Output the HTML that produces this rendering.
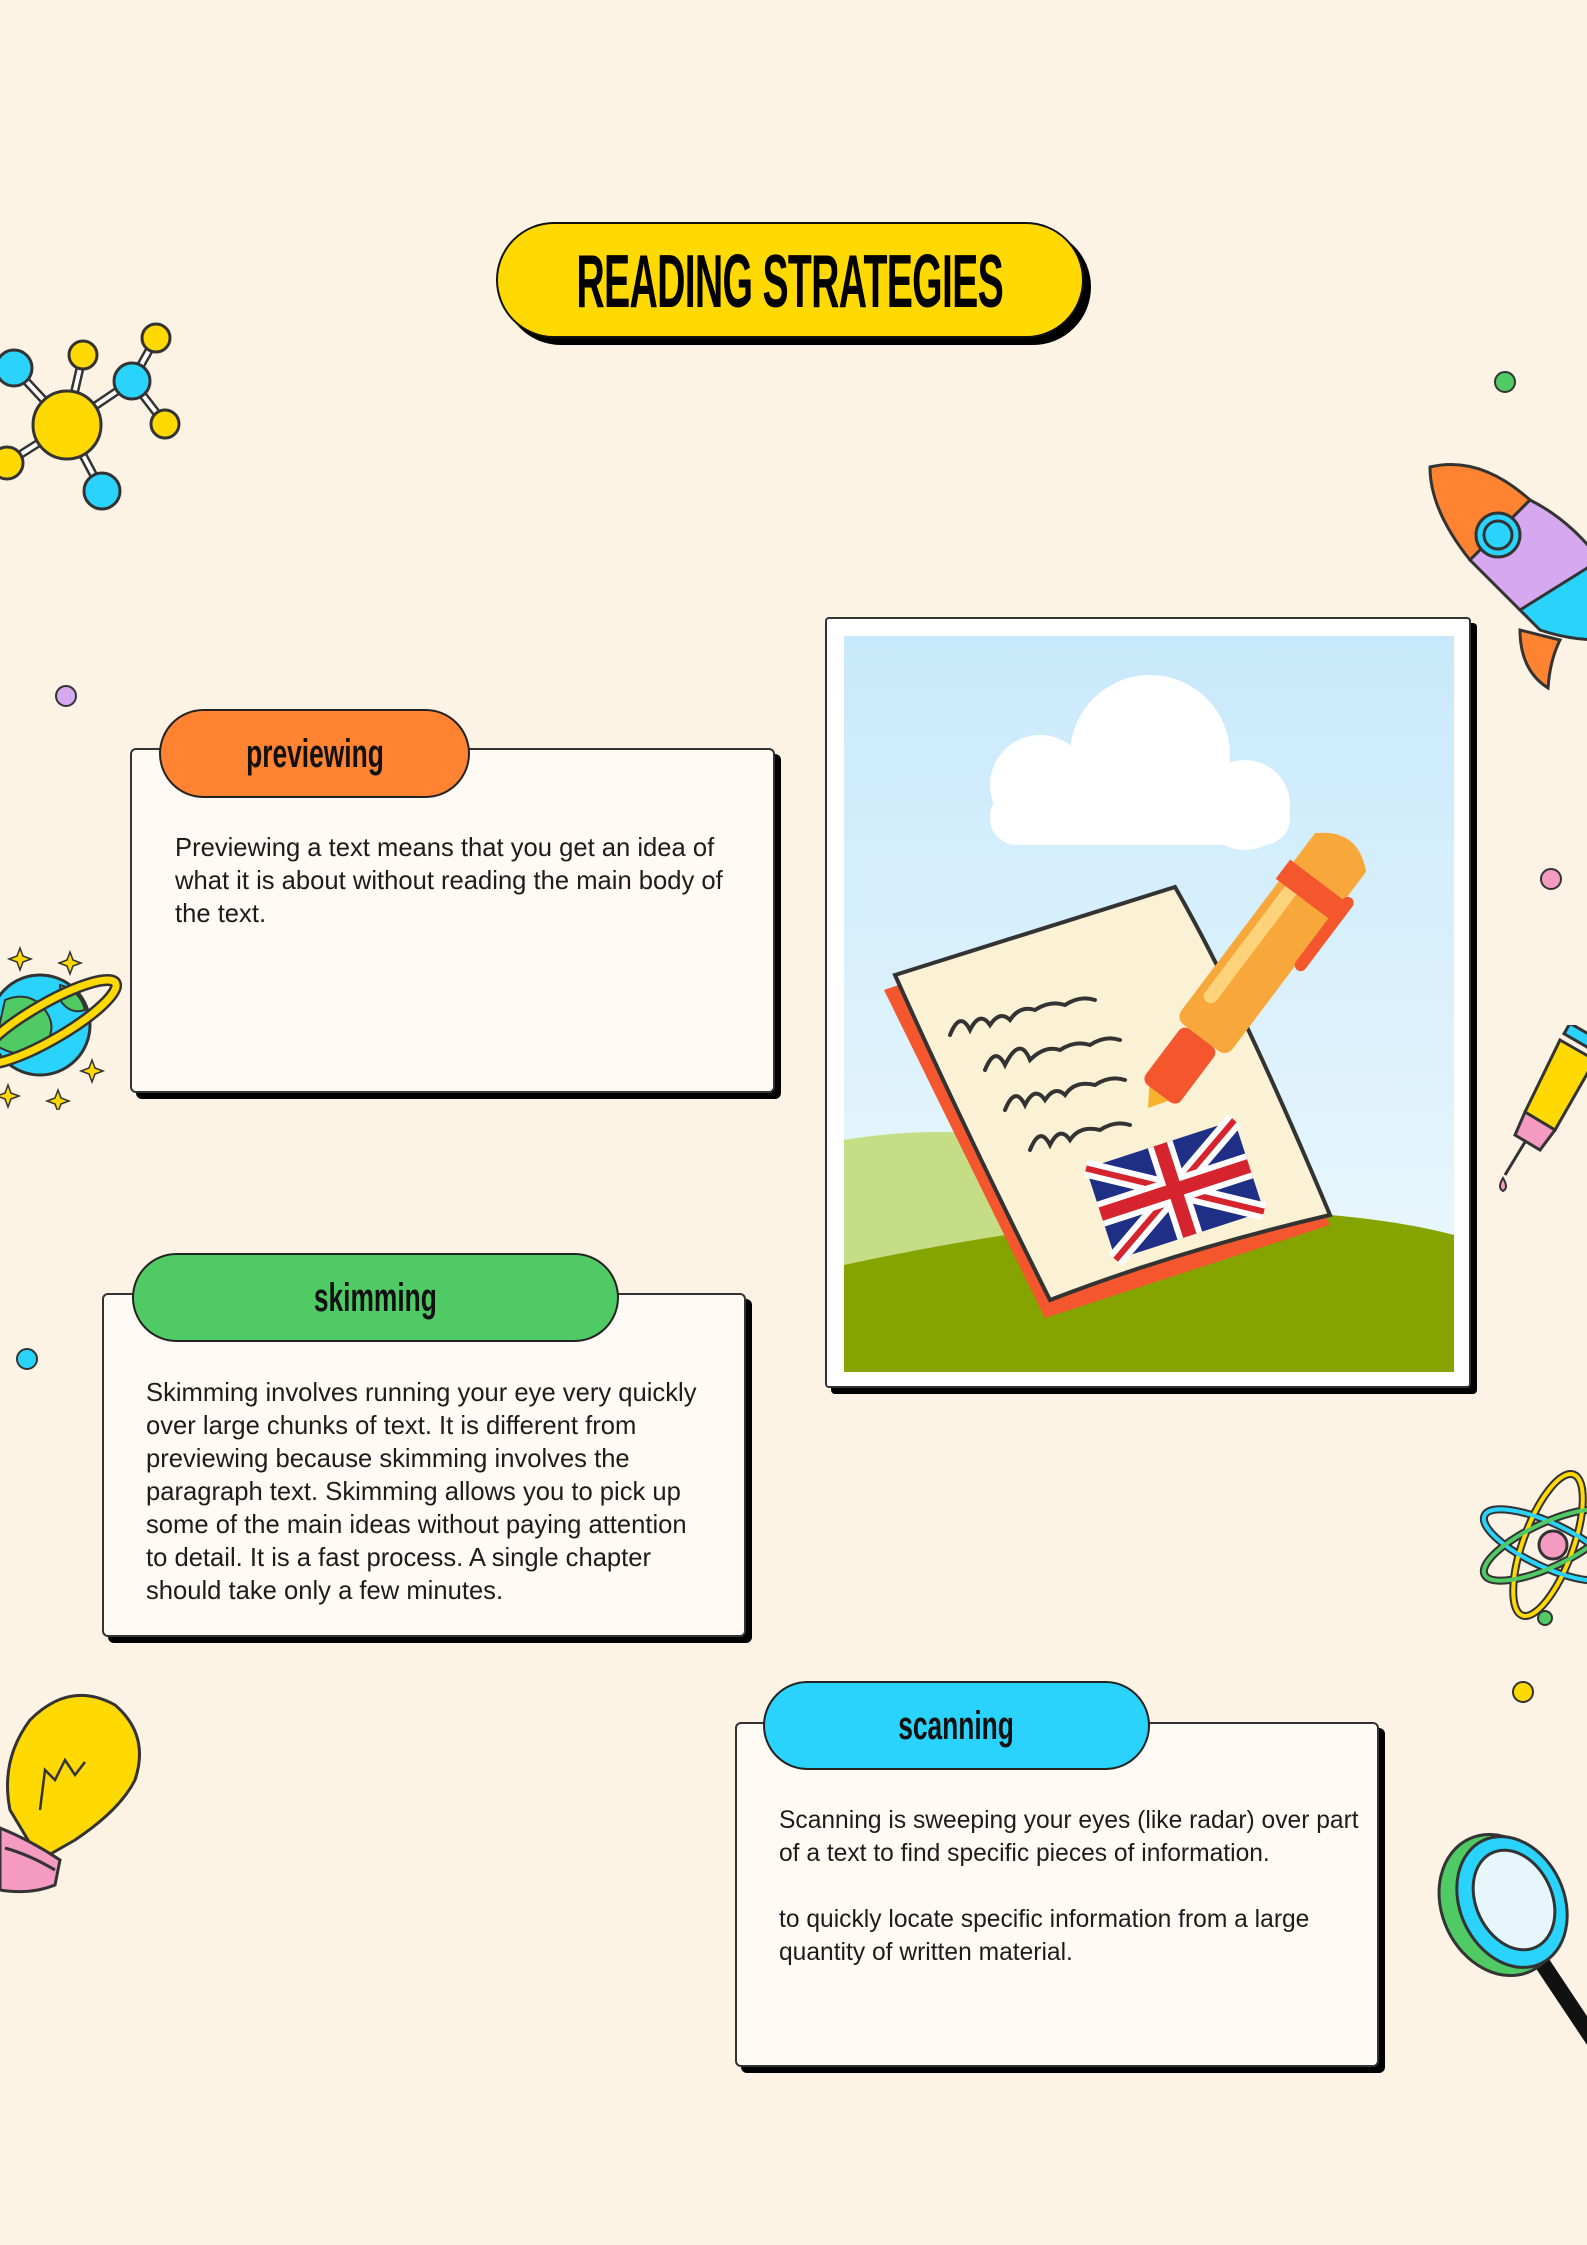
<!DOCTYPE html>
<html><head><meta charset="utf-8"><style>
*{margin:0;padding:0;box-sizing:border-box}
body{width:1587px;height:2245px;background:#fdf3e4;position:relative;overflow:hidden;font-family:"Liberation Sans",sans-serif;color:#1a1a1a}
.abs{position:absolute}
.title{left:496px;top:222px;width:588px;height:116px;background:#ffd900;border:2px solid #111;border-radius:58px;box-shadow:7px 7px 0 #000;display:flex;align-items:center;justify-content:center;white-space:nowrap}
.title span{font-family:"Liberation Sans Narrow","Liberation Sans",sans-serif;font-weight:bold;font-size:56px;transform:scale(0.70,1.35);letter-spacing:-1px;color:#000;white-space:nowrap;display:inline-block}
.card{background:#fffaf4;border:2px solid #333;border-radius:6px;box-shadow:6px 6px 0 #000}
.pill{border:2px solid #222;border-radius:45px;display:flex;align-items:center;justify-content:center}
.pill span{font-family:"Liberation Sans Narrow","Liberation Sans",sans-serif;font-weight:bold;font-size:31px;transform:scale(0.85,1.3);color:#111;display:inline-block}
.txt{font-size:25.6px;line-height:33px;color:#1c1c1c}
</style></head><body>

<div class="abs title"><span>READING STRATEGIES</span></div>

<!-- card 1 -->
<div class="abs card" style="left:130px;top:748px;width:645px;height:345px"></div>
<div class="abs pill" style="left:159px;top:709px;width:311px;height:89px;background:#ff8331"><span>previewing</span></div>
<div class="abs txt" style="left:175px;top:832px;width:565px">Previewing a text means that you get an idea of what it is about without reading the main body of the text.</div>

<!-- card 2 -->
<div class="abs card" style="left:102px;top:1293px;width:644px;height:344px"></div>
<div class="abs pill" style="left:132px;top:1253px;width:487px;height:89px;background:#4fca64"><span>skimming</span></div>
<div class="abs txt" style="left:146px;top:1377px;width:556px">Skimming involves running your eye very quickly over large chunks of text. It is different from previewing because skimming involves the paragraph text. Skimming allows you to pick up some of the main ideas without paying attention to detail. It is a fast process. A single chapter should take only a few minutes.</div>

<!-- card 3 -->
<div class="abs card" style="left:735px;top:1722px;width:644px;height:345px"></div>
<div class="abs pill" style="left:763px;top:1681px;width:387px;height:89px;background:#2ad3fb"><span>scanning</span></div>
<div class="abs txt" style="left:779px;top:1804px;width:590px;font-size:24.6px">Scanning is sweeping your eyes (like radar) over part of a text to find specific pieces of information.<br><br>to quickly locate specific information from a large quantity of written material.</div>

<!-- photo -->
<div class="abs" style="left:825px;top:617px;width:646px;height:771px;background:#fff;border:2px solid #333;border-radius:4px;box-shadow:6px 6px 0 #000"></div>
<svg class="abs" style="left:844px;top:636px" width="610" height="736" viewBox="844 636 610 736">
<defs><linearGradient id="sky" x1="0" y1="0" x2="0" y2="1"><stop offset="0" stop-color="#c8e9fb"/><stop offset="1" stop-color="#eef9fd"/></linearGradient></defs>
<rect x="844" y="636" width="610" height="736" fill="url(#sky)"/>
<g fill="#fff"><circle cx="1040" cy="785" r="50"/><circle cx="1150" cy="755" r="80"/><circle cx="1245" cy="805" r="45"/><rect x="990" y="790" width="300" height="55" rx="27"/></g>
<path d="M844 1140 Q960 1120 1100 1150 L1100 1372 L844 1372Z" fill="#c5de86"/>
<path d="M844 1265 Q1050 1220 1250 1210 Q1380 1215 1454 1235 L1454 1372 L844 1372Z" fill="#86a400"/>
<path d="M884 990 L1160 895 L1330 1225 L1045 1318 Z" fill="#f4572e" />
<path d="M895 975 L1175 887 Q1240 1000 1330 1215 Q1180 1250 1050 1300 Q960 1120 895 975Z" fill="#fbf2d5" stroke="#333" stroke-width="4"/>
<g fill="none" stroke="#333" stroke-width="4" stroke-linecap="round">
<path d="M950 1035 q10 -25 20 -5 q10 -20 20 -5 q10 -15 20 -5 q10 -15 25 -10 q15 -10 30 -5 q15 -10 30 -5"/>
<path d="M985 1070 q10 -25 20 -5 q15 -30 25 -5 q15 -15 30 -10 q15 -10 30 -5 q15 -10 30 -5"/>
<path d="M1005 1110 q10 -25 20 -5 q10 -20 20 -5 q10 -15 20 -5 q10 -15 30 -10 q15 -10 30 -5"/>
<path d="M1030 1150 q10 -25 20 -5 q10 -20 20 -5 q10 -15 30 -10 q15 -10 30 -5"/>
</g>
<g transform="translate(1175,1190) rotate(-18)">
<rect x="-78" y="-48" width="156" height="96" fill="#1f2f86"/>
<path d="M-78 -48 L78 48 M78 -48 L-78 48" stroke="#fff" stroke-width="18"/>
<path d="M-78 -48 L78 48 M78 -48 L-78 48" stroke="#d6242e" stroke-width="6"/>
<path d="M0 -48 V48 M-78 0 H78" stroke="#fff" stroke-width="26"/>
<path d="M0 -48 V48 M-78 0 H78" stroke="#d6242e" stroke-width="14"/>
</g>
<g transform="translate(1148,1108) rotate(-53)">
<path d="M0 0 L18 -12 L18 12 Z" fill="#f7b330"/>
<rect x="18" y="-22" width="70" height="44" rx="8" fill="#f4572e"/>
<rect x="88" y="-32" width="190" height="64" rx="10" fill="#f8a83a"/>
<rect x="120" y="-24" width="150" height="14" rx="7" fill="#fcd37a"/>
<rect x="260" y="-36" width="24" height="72" fill="#f4572e"/>
<path d="M284 -32 L320 -32 Q350 0 320 32 L284 32Z" fill="#f8a83a"/>
<rect x="200" y="30" width="90" height="12" rx="6" fill="#f4572e"/>
</g>
</svg>

<!-- dots -->
<div class="abs" style="left:1494px;top:371px;width:22px;height:22px;border-radius:50%;background:#4fca64;border:2px solid #333"></div>
<div class="abs" style="left:55px;top:685px;width:22px;height:22px;border-radius:50%;background:#d5a8f0;border:2px solid #333"></div>
<div class="abs" style="left:1540px;top:868px;width:22px;height:22px;border-radius:50%;background:#f59ac0;border:2px solid #333"></div>
<div class="abs" style="left:16px;top:1348px;width:22px;height:22px;border-radius:50%;background:#2ad3fb;border:2px solid #333"></div>
<div class="abs" style="left:1512px;top:1681px;width:22px;height:22px;border-radius:50%;background:#ffd900;border:2px solid #333"></div>

<!-- molecule -->
<svg class="abs" style="left:0;top:320px" width="190" height="200" viewBox="0 320 190 200">
<g stroke="#333" stroke-width="3">
<path d="M67 425 L14 368 M67 425 L83 355 M67 425 L132 381 M132 381 L156 338 M132 381 L165 424 M67 425 L102 491 M67 425 L7 463" stroke-width="9"/>
<path d="M67 425 L14 368 M67 425 L83 355 M67 425 L132 381 M132 381 L156 338 M132 381 L165 424 M67 425 L102 491 M67 425 L7 463" stroke="#fff" stroke-width="4"/>
<circle cx="67" cy="425" r="34" fill="#ffd900"/>
<circle cx="14" cy="368" r="18" fill="#2ad3fb"/>
<circle cx="83" cy="355" r="14" fill="#ffd900"/>
<circle cx="132" cy="381" r="18" fill="#2ad3fb"/>
<circle cx="156" cy="338" r="14" fill="#ffd900"/>
<circle cx="165" cy="424" r="14" fill="#ffd900"/>
<circle cx="102" cy="491" r="18" fill="#2ad3fb"/>
<circle cx="7" cy="463" r="16" fill="#ffd900"/>
</g></svg>

<!-- planet -->
<svg class="abs" style="left:0;top:940px" width="130" height="170" viewBox="0 940 130 170">
<circle cx="40" cy="1025" r="50" fill="#2ad3fb" stroke="#333" stroke-width="3"/>
<path d="M5 1000 Q30 990 45 1010 Q60 1030 40 1050 Q20 1060 -5 1045Z M60 985 Q80 990 85 1010 Q70 1015 60 1000Z" fill="#4fca64" stroke="#333" stroke-width="2"/>
<ellipse cx="48" cy="1022" rx="78" ry="18" transform="rotate(-30 48 1022)" fill="none" stroke="#333" stroke-width="12"/>
<ellipse cx="48" cy="1022" rx="78" ry="18" transform="rotate(-30 48 1022)" fill="none" stroke="#ffd900" stroke-width="7"/>
<g fill="#ffd900" stroke="#333" stroke-width="1.5"><path d="M20 948 l3 8 8 3 -8 3 -3 8 -3 -8 -8 -3 8 -3z"/><path d="M70 952 l3 8 8 3 -8 3 -3 8 -3 -8 -8 -3 8 -3z"/><path d="M92 1060 l3 8 8 3 -8 3 -3 8 -3 -8 -8 -3 8 -3z"/><path d="M58 1090 l3 8 8 3 -8 3 -3 8 -3 -8 -8 -3 8 -3z"/><path d="M8 1085 l3 8 8 3 -8 3 -3 8 -3 -8 -8 -3 8 -3z"/></g>
</svg>

<!-- bulb -->
<svg class="abs" style="left:0;top:1685px" width="150" height="220" viewBox="0 1685 150 220">
<g stroke="#333" stroke-width="3">
<path d="M10 1810 Q0 1760 30 1720 Q70 1680 115 1705 Q150 1735 135 1780 Q120 1810 75 1840 L40 1860 Z" fill="#ffd900"/>
<path d="M40 1810 L45 1770 L55 1780 L65 1760 L75 1775 L85 1762" fill="none" stroke-width="2.5"/>
<path d="M0 1828 Q30 1840 60 1860 L55 1885 Q30 1895 0 1890Z" fill="#f59ac0"/>
<path d="M5 1848 Q30 1855 55 1870" fill="none"/>
</g></svg>

<!-- rocket -->
<svg class="abs" style="left:1420px;top:455px" width="167" height="240" viewBox="1420 455 167 240">
<g stroke="#333" stroke-width="3">
<path d="M1430 467 Q1480 455 1530 500 L1470 560 Q1430 510 1430 467Z" fill="#ff8331"/>
<path d="M1470 560 L1530 500 Q1570 520 1600 560 L1600 620 Q1560 630 1520 610Z" fill="#d5a8f0"/>
<path d="M1520 610 L1600 560 L1600 640 Q1570 640 1540 630Z" fill="#2ad3fb"/>
<circle cx="1498" cy="535" r="22" fill="#2ad3fb"/><circle cx="1498" cy="535" r="14" fill="#2ad3fb"/>
<path d="M1520 630 Q1520 670 1548 688 Q1550 660 1560 640Z" fill="#ff8331"/>
</g></svg>

<!-- syringe -->
<svg class="abs" style="left:1490px;top:1025px" width="97" height="170" viewBox="1490 1025 97 170">
<g stroke="#333" stroke-width="3">
<path d="M1560 1040 L1595 1060 L1555 1130 L1525 1112Z" fill="#ffd900"/>
<rect x="1565" y="1030" width="30" height="12" fill="#2ad3fb" transform="rotate(30 1580 1036)"/>
<path d="M1525 1112 L1555 1130 L1540 1150 L1515 1135Z" fill="#f59ac0"/>
<path d="M1525 1142 L1505 1175"/>
<path d="M1503 1178 q-6 10 0 13 q6 -3 0 -13z" fill="#f59ac0" stroke-width="2"/>
</g></svg>

<!-- atom -->
<svg class="abs" style="left:1475px;top:1455px" width="112" height="180" viewBox="1475 1455 112 180">
<g fill="none" stroke="#333" stroke-width="8">
<ellipse cx="1548" cy="1545" rx="25" ry="75" transform="rotate(20 1548 1545)"/>
<ellipse cx="1548" cy="1545" rx="70" ry="22" transform="rotate(25 1548 1545)"/>
<ellipse cx="1548" cy="1545" rx="70" ry="22" transform="rotate(-25 1548 1545)"/>
</g>
<g fill="none" stroke-width="4">
<ellipse cx="1548" cy="1545" rx="25" ry="75" transform="rotate(20 1548 1545)" stroke="#ffd900"/>
<ellipse cx="1548" cy="1545" rx="70" ry="22" transform="rotate(25 1548 1545)" stroke="#2ad3fb"/>
<ellipse cx="1548" cy="1545" rx="70" ry="22" transform="rotate(-25 1548 1545)" stroke="#4fca64"/>
</g>
<circle cx="1553" cy="1545" r="14" fill="#f59ac0" stroke="#333" stroke-width="3"/>
<circle cx="1545" cy="1618" r="7" fill="#4fca64" stroke="#333" stroke-width="2"/>
</svg>

<!-- magnifier -->
<svg class="abs" style="left:1430px;top:1825px" width="157" height="245" viewBox="1430 1825 157 245">
<path d="M1540 1960 L1600 2050" stroke="#111" stroke-width="16" stroke-linecap="round"/>
<ellipse cx="1500" cy="1905" rx="58" ry="73" transform="rotate(-25 1500 1905)" fill="#4fca64" stroke="#333" stroke-width="3"/>
<ellipse cx="1512" cy="1902" rx="52" ry="68" transform="rotate(-25 1512 1902)" fill="#2ad3fb" stroke="#333" stroke-width="3"/>
<ellipse cx="1514" cy="1900" rx="38" ry="52" transform="rotate(-25 1514 1900)" fill="#e6f6fb" stroke="#333" stroke-width="3"/>
</svg>

</body></html>
